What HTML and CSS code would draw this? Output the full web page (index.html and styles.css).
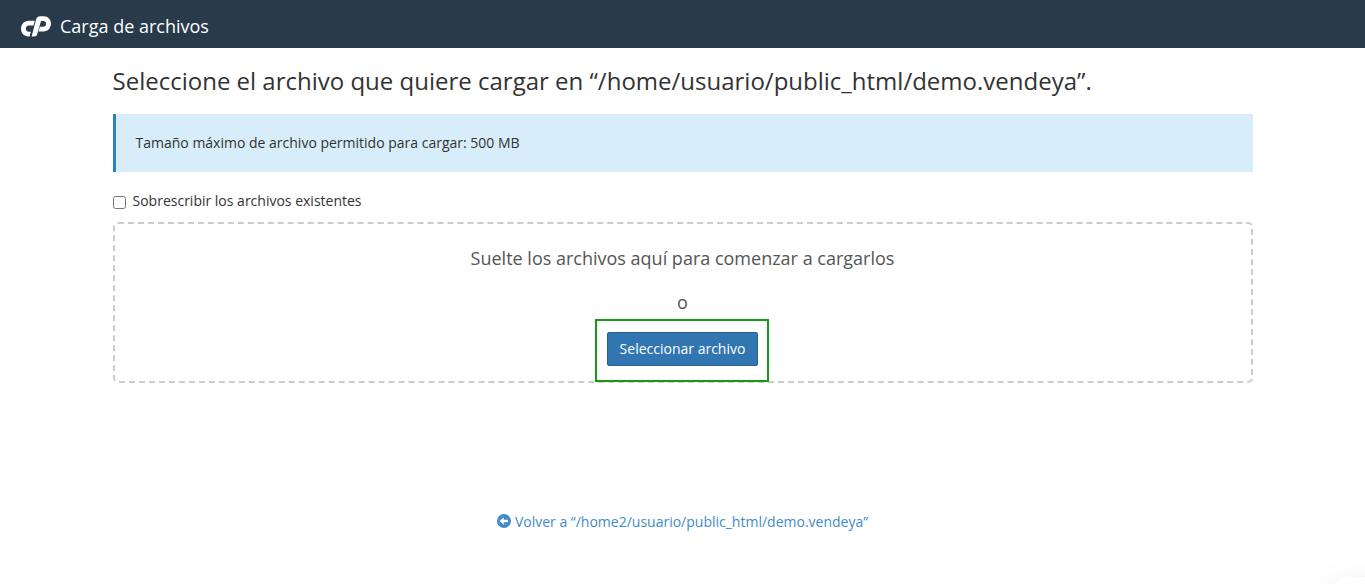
FILE: index.html
```html
<!DOCTYPE html>
<html lang="es">
<head>
<meta charset="utf-8">
<meta name="viewport" content="width=device-width, initial-scale=1">
<title>Carga de archivos</title>
<link rel="stylesheet" href="styles.css">
</head>
<body>
<header class="topbar">
  <svg class="logo" viewBox="0 0 30 21" aria-hidden="true">
    <path d="M7.5 4.8H13.8L12.5 9.5H7.8C6 9.5 4.9 11 4.9 12.7C4.9 14.5 6.1 15.7 7.8 15.7H9.8L8.6 20.4H7.3C3 20.4 0 17 0 12.8C0 8.4 3.3 4.8 7.5 4.8Z"/>
    <path d="M10.6 20.4L15.1 3.4C15.7 1.3 17.1.2 19.2.2H22.8C27 .2 30 3.5 30 7.6C30 12 26.8 15.6 22.6 15.6H17.6L18.9 10.8H22.3C24.1 10.8 25.1 9.4 25.1 7.8C25.1 6.2 24 5 22.4 5H20L16.2 18.2C15.8 19.8 14.8 20.4 13.2 20.4Z"/>
  </svg>
  <span class="topbar-title">Carga de archivos</span>
</header>
<main class="container">
  <h1 class="heading">Seleccione el archivo que quiere cargar en “/home/usuario/public_html/demo.vendeya”.</h1>
  <div class="notice">Tamaño máximo de archivo permitido para cargar: 500 MB</div>
  <div class="option">
    <input class="option-box" type="checkbox" id="overwrite">
    <label for="overwrite">Sobrescribir los archivos existentes</label>
  </div>
  <section class="dropzone">
    <p class="drop-text">Suelte los archivos aquí para comenzar a cargarlos</p>
    <p class="drop-text drop-or">o</p>
    <div class="picker">
      <button class="button" type="button">Seleccionar archivo</button>
    </div>
  </section>
  <a class="back" href="#">
    <svg class="back-icon" viewBox="0 0 14 14" aria-hidden="true">
      <circle cx="7" cy="7" r="7"/>
      <path d="M2.6 7L6.8 3.2V5.8H11V8.2H6.8V10.8Z"/>
    </svg>
    <span>Volver a “/home2/usuario/public_html/demo.vendeya”</span>
  </a>
</main>
<div class="bubble"></div>
</body>
</html>
```
FILE: styles.css
```css
* {
  box-sizing: border-box;
}

body {
  margin: 0;
  min-height: 100vh;
  background: #fff;
  color: #333;
  font: 14px/20px "Open Sans", sans-serif;
}

.topbar {
  display: flex;
  align-items: center;
  gap: 9px;
  height: 48px;
  padding: 4px 21px 0;
  background: #293a4a;
}

.logo {
  width: 30px;
  height: 21px;
  fill: #fff;
}

.topbar-title {
  color: #fff;
  font-size: 18px;
  line-height: 26px;
}

.container {
  display: flex;
  flex-direction: column;
  max-width: 1170px;
  margin: 0 auto;
  padding: 0 15px;
}

.heading {
  margin: 20px 0 20px;
  font-size: 24px;
  font-weight: 400;
  line-height: 26px;
}

.notice {
  padding: 19px 20px;
  border-left: 3px solid #2a84c0;
  background: #d7edf9;
}

.option {
  display: flex;
  align-items: center;
  gap: 7px;
  margin: 19px 0 11px;
}

.option-box {
  width: 13px;
  height: 13px;
  margin: 3px 0 0;
}

.dropzone {
  display: flex;
  flex-direction: column;
  align-items: center;
  padding: 21px 20px 15px;
  border: 2px dashed #ccc;
  border-radius: 5px;
  color: #555;
}

.drop-text {
  margin: 0;
  font-size: 18px;
  line-height: 26px;
  text-align: center;
}

.drop-or {
  margin: 18px 0 17px;
}

.picker {
  position: relative;
}

.picker::after {
  position: absolute;
  inset: -13px -11px -16px -12px;
  border: 2px solid #179b17;
  content: "";
  pointer-events: none;
}

.button {
  display: block;
  height: 34px;
  padding: 6px 12px;
  border: 1px solid #285f8f;
  border-radius: 2px;
  background: #3276b1;
  color: #fff;
  font: inherit;
}

.back {
  display: flex;
  align-items: center;
  align-self: center;
  gap: 4px;
  margin-top: 129px;
  color: #428bca;
  text-decoration: none;
}

.back-icon {
  width: 14px;
  height: 14px;
  margin-bottom: 2px;
  fill: #428bca;
}

.back-icon path {
  fill: #fff;
}

.bubble {
  position: fixed;
  right: -40px;
  bottom: -53px;
  width: 80px;
  height: 60px;
  border-radius: 28px;
  background: #fff;
  box-shadow: 0 2px 32px rgba(0, 0, 0, 0.05);
}
```
